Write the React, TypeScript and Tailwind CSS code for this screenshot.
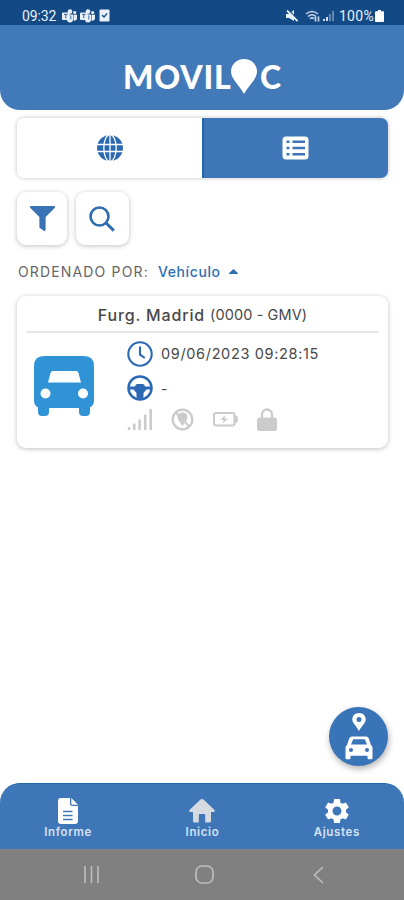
import type { ReactNode } from 'react';
import { FaFilter } from 'react-icons/fa';
import { MdSettings } from 'react-icons/md';

function TeamsIcon() {
  return (
    <svg width="15" height="14" viewBox="0 0 15 14" fill="#e9f0f8">
      <circle cx="8" cy="2.6" r="2.3" />
      <circle cx="12.7" cy="3.6" r="1.6" />
      <path d="M5 5.5h6v5a3 3 0 0 1-6 0zM11.5 5.7H15v3.7a2.4 2.4 0 0 1-3.5 2z" />
      <rect x="0" y="3.5" width="7.5" height="7.5" rx="1" />
      <path d="M2 5.4h3.6M3.8 5.4v4M8.8 6.5v4" stroke="#134985" strokeWidth="0.8" />
    </svg>
  );
}

function StatusBar() {
  return (
    <div className="flex h-[25px] shrink-0 items-center justify-between bg-[#134985] pt-[6px] pr-[20px] pl-[22px] text-[#e9f0f8]">
      <div className="flex items-center">
        <span className="w-[40px] font-['Roboto',sans-serif] text-[14px] leading-none tracking-[-0.1px]">09:32</span>
        <div className="flex items-center gap-[3px]">
          <TeamsIcon />
          <TeamsIcon />
          <svg className="ml-[1px]" width="11" height="13" viewBox="0 0 11 13">
            <rect x="0.5" y="0.5" width="10" height="12" rx="1" fill="#e9f0f8" />
            <path d="M3 6l2 2 3.2-3.6" fill="none" stroke="#134985" strokeWidth="1.3" />
          </svg>
        </div>
      </div>
      <div className="flex items-center">
        <svg width="12" height="12" viewBox="0 0 12 12" fill="#e9f0f8">
          <path d="M0 4h3l5-4v11L3 8H0z" />
          <path d="M3 0.5l9 9" stroke="#134985" strokeWidth="1.2" />
          <path d="M1 0.5l10.5 10.5" stroke="#e9f0f8" strokeWidth="1.8" />
        </svg>
        <svg className="ml-[7px]" width="16" height="12" viewBox="0 0 16 12" fill="none" stroke="#c5d4e6" strokeWidth="1.5">
          <path d="M1 4Q7-1 13 4M3 6.5Q7 3 11 6.5M5 8.8Q7 7 9 8.8" />
          <path d="M10.5 6.5v5M13.5 6.5v5" strokeWidth="1.7" />
        </svg>
        <svg className="ml-[2px]" width="12" height="12" viewBox="0 0 12 12">
          <path d="M1 11v-2M4 11V7" stroke="#e9f0f8" strokeWidth="1.8" />
          <path d="M7 11V4M10 11V1" stroke="#6f90b7" strokeWidth="1.8" />
        </svg>
        <span className="ml-[4px] font-['Roboto',sans-serif] text-[14px] leading-none tracking-[0.3px]">100%</span>
        <svg className="ml-[1px]" width="9" height="12" viewBox="0 0 9 12" fill="#fff">
          <path d="M3 0h3v1.3h2.2q.8 0 .8.9v8.9q0 .9-.8.9H.8Q0 12 0 11.1V2.2Q0 1.3.8 1.3H3z" />
        </svg>
      </div>
    </div>
  );
}

function Logo() {
  return (
    <h1 className="flex items-center font-['Lato',sans-serif] text-[32px] leading-[34px] font-black text-white">
      <span className="w-[108px] tracking-[0.8px]">MOVIL</span>
      <svg width="26" height="35" viewBox="0 0 26 35" fill="#fff">
        <path d="M13 0C5.5 0 0 5.6 0 12.5 0 20 7.5 25 13 35 18.5 25 26 20 26 12.5 26 5.6 20.5 0 13 0z" />
      </svg>
      <span className="ml-[3px]">C</span>
    </h1>
  );
}

function GlobeIcon() {
  return (
    <svg width="26" height="26" viewBox="0 0 26 26">
      <circle cx="13" cy="13" r="13" fill="#2b69b0" />
      <g fill="none" stroke="#fff" strokeWidth="1.3">
        <ellipse cx="13" cy="13" rx="6.2" ry="13.5" />
        <path d="M13 0v26M0 9.5h26M0 16.5h26" />
      </g>
    </svg>
  );
}

function ListIcon() {
  return (
    <svg width="27" height="24" viewBox="0 0 27 24">
      <rect x="0.5" y="0.5" width="26" height="23" rx="3.5" fill="#fff" />
      <g stroke="#3e75b8" strokeWidth="2.6">
        <path d="M4.500 5.8h3M4.5 12h3M4.5 18.2h3" />
        <path d="M10.500 5.8h12.5M10.5 12h12.5M10.5 18.2h12.5" />
      </g>
    </svg>
  );
}

function VanIcon() {
  return (
    <svg width="60" height="60" viewBox="0 0 60 60">
      <path
        fill="#2f93d6"
        fillRule="evenodd"
        d="M10 0h40q10 0 10 10v35q0 3-2 5l-2 1.5V56q0 4-4 4h-3q-4 0-4-4v-4H15v4q0 4-4 4H8q-4 0-4-4v-4.5L2 50q-2-2-2-5V10Q0 0 10 0zM19 15q-2 0-2.5 2L14 26.5h33L44.5 17q-.5-2-2.5-2zM11.5 32.5a5 5 0 1 0 0 10 5 5 0 0 0 0-10zM49 32.5a5 5 0 1 0 0 10 5 5 0 0 0 0-10z"
      />
    </svg>
  );
}

function ClockIcon() {
  return (
    <svg width="26" height="26" viewBox="0 0 26 26" fill="none" stroke="#2b69b5" strokeWidth="2.1">
      <circle cx="13" cy="13" r="11.7" />
      <path d="M13 5.5v8.2l4.8 3.3" />
    </svg>
  );
}

function SteeringIcon() {
  return (
    <svg width="26" height="26" viewBox="0 0 26 26">
      <circle cx="13" cy="13" r="11.5" fill="none" stroke="#2b69b5" strokeWidth="2.5" />
      <path d="M2 11.5h6Q8.500 9 10 9h6q1.500 0 2 2.500h6v3h-4.500L16.500 18v6h-7v-6L6.500 14.500H2z" fill="#2b69b5" />
    </svg>
  );
}

function SignalIcon() {
  return (
    <svg width="26" height="23" viewBox="0 0 26 23" stroke="#cbcbcb" strokeWidth="2.6" strokeLinecap="round">
      <path d="M2 21v-.8M7.3 21v-4.5M12.6 21v-8.500M18.2 21V7.5M23.7 21V2" />
    </svg>
  );
}

function NoLocationIcon() {
  return (
    <svg width="23" height="23" viewBox="0 0 23 23">
      <circle cx="11.5" cy="11.5" r="9.8" fill="none" stroke="#cbcbcb" strokeWidth="2.3" />
      <path d="M11.5 4.5c-3 0-5 2-5 4.8 0 3.2 3.2 5 5 9.2 1.8-4.2 5-6 5-9.2 0-2.8-2-4.8-5-4.8z" fill="#cbcbcb" />
      <path d="M5.5 4.5L18.5 18" stroke="#e4e4e4" strokeWidth="1" />
      <path d="M4.5 4.5l14 14" stroke="#cbcbcb" strokeWidth="1.9" />
    </svg>
  );
}

function BatteryIcon() {
  return (
    <svg width="25" height="15" viewBox="0 0 25 15">
      <rect x="1" y="1" width="20.5" height="12.5" rx="2" fill="none" stroke="#cbcbcb" strokeWidth="2" />
      <path d="M22 3q3 1 3 4.2T22 11.5z" fill="#cbcbcb" />
      <path d="M12 3L7.5 8h3.2l-1 3.5L15 6.5h-3.3z" fill="#cbcbcb" />
    </svg>
  );
}

function LockIcon() {
  return (
    <svg width="20" height="23" viewBox="0 0 20 23">
      <rect y="9.5" width="20" height="13.5" rx="2.5" fill="#cbcbcb" />
      <path d="M5 10V6.5a5 5 0 0 1 10 0V10" fill="none" stroke="#cbcbcb" strokeWidth="2.3" />
    </svg>
  );
}

function VehicleCard() {
  return (
    <div className="mt-[16px] mr-[16px] ml-[17px] h-[152px] rounded-[9px] bg-white px-[9px] font-['Inter',sans-serif] text-[#484848] shadow-[0_1px_5px_rgba(0,0,0,0.25)]">
      <div className="flex h-[37px] items-center justify-center border-b-2 border-[#e5e5e5] pt-[2px] whitespace-nowrap">
        <span className="text-[16px] font-medium tracking-[0.85px]">Furg. Madrid</span>
        <span className="ml-[5px] text-[14.5px] tracking-[0.1px]">(0000 - GMV)</span>
      </div>
      <div className="flex">
        <div className="w-[101px] pt-[23px] pl-[8px]">
          <VanIcon />
        </div>
        <div className="pt-[8px]">
          <div className="flex h-[26px] items-center gap-[8px]">
            <ClockIcon />
            <span className="text-[14.5px] tracking-[0.65px] whitespace-nowrap">09/06/2023 09:28:15</span>
          </div>
          <div className="mt-[8px] flex h-[26px] items-center gap-[8px]">
            <SteeringIcon />
            <span className="text-[14px]">-</span>
          </div>
          <div className="mt-[7px] flex h-[23px] items-center">
            <SignalIcon />
            <span className="ml-[18px]"><NoLocationIcon /></span>
            <span className="ml-[19px]"><BatteryIcon /></span>
            <span className="ml-[19px]"><LockIcon /></span>
          </div>
        </div>
      </div>
    </div>
  );
}

function LocateButton() {
  return (
    <button className="mr-[16px] flex h-[59px] w-[59px] items-center justify-center rounded-full bg-[#3973b8] shadow-[1px_3px_6px_rgba(0,0,0,0.3)]">
      <svg width="28" height="47" viewBox="0 0 28 47">
        <path fill="#fff" fillRule="evenodd" d="M14 0C10 0 7.3 2.8 7.3 6.5 7.3 10 11 12.5 14 18c3-5.5 6.7-8 6.7-11.5C20.7 2.8 18 0 14 0zm0 4a2.5 2.5 0 1 1 0 5 2.5 2.5 0 0 1 0-5z" />
        <path fill="#fff" fillRule="evenodd" d="M7 23.5h14q2 0 2.8 2l2.2 6.5q1.5 1 1.5 3V45q0 1.2-1.2 1.2h-2.6q-1.2 0-1.2-1.2v-2.2h-17V45q0 1.2-1.2 1.2H1.7Q.5 46.200.5 45V35q0-2 1.5-3l2.2-6.5q.8-2 2.8-2zm1.2 2.7L6 31.5h16l-2.2-5.3zM6 35a2 2 0 1 0 0 4 2 2 0 0 0 0-4zM22 35a2 2 0 1 0 0 4 2 2 0 0 0 0-4z" />
      </svg>
    </button>
  );
}

function DocumentIcon() {
  return (
    <svg width="20" height="26" viewBox="0 0 20 26">
      <path d="M3 0h9v5.5Q12 8 14.5 8H20v15q0 3-3 3H3q-3 0-3-3V3Q0 0 3 0zM13.3 0L20 6.8h-5.5q-1.2 0-1.2-1.3z" fill="#fff" />
      <path d="M5 13.5h9.5M5 17.5h9.5M5 21.5h9.5" stroke="#3f76b8" strokeWidth="1.5" />
    </svg>
  );
}

function HomeIcon() {
  return (
    <svg width="26" height="24" viewBox="0 0 26 24" fill="#d6dbe1">
      <path d="M11.5.6q1.5-1.2 3 0L25.5 11q1 1.5-.7 2H22v9q0 1.5-1.5 1.5h-4.3V16q0-1-1-1h-4.400q-1 0-1 1v7.500H5.5Q4 23.5 4 22v-9H1.2Q-.5 12.5.5 11z" />
    </svg>
  );
}

function NavItem({ icon, label }: { icon: ReactNode; label: string }) {
  return (
    <div className="flex flex-1 flex-col items-center">
      <div className="flex h-[28px] items-center">{icon}</div>
      <span className="mt-[1px] font-['Inter',sans-serif] text-[11.5px] leading-[13px] font-semibold tracking-[0.65px] text-[#d5e2f3]">{label}</span>
    </div>
  );
}

export default function App() {
  return (
    <div className="flex h-[900px] w-[404px] flex-col overflow-hidden bg-white">
      <StatusBar />
      <header className="flex h-[85px] shrink-0 items-start justify-center rounded-b-[20px] bg-[#4279b9] pt-[34px]">
        <Logo />
      </header>

      <div className="mt-[8px] mr-[16px] ml-[17px] flex h-[60px] shrink-0 rounded-[7px] shadow-[0_0_4px_rgba(0,0,0,0.25)]">
        <button className="flex w-[185px] items-center justify-center rounded-l-[7px] bg-white pl-[1px]"><GlobeIcon /></button>
        <button className="flex flex-1 items-center justify-center rounded-r-[7px] border-l-2 border-[#206aab] bg-[#3f76b8] pr-[1px]"><ListIcon /></button>
      </div>

      <div className="mt-[14px] ml-[17px] flex gap-[9px]">
        <button className="flex h-[53px] w-[50px] items-center justify-center rounded-[9px] bg-white shadow-[0_1px_5px_rgba(0,0,0,0.25)]">
          <FaFilter size={25} color="#3973b5" />
        </button>
        <button className="flex h-[53px] w-[53px] items-center justify-center rounded-[9px] bg-white pr-[1px] shadow-[0_1px_5px_rgba(0,0,0,0.25)]">
          <svg width="26" height="26" viewBox="0 0 26 26" fill="none" stroke="#2e6caf" strokeWidth="2.6">
            <circle cx="10.5" cy="10.5" r="9" />
            <path d="M16.8 16.8l8 7.8" strokeWidth="3" />
          </svg>
        </button>
      </div>

      <div className="mt-[17px] ml-[18px] flex h-[18px] items-center font-['Inter',sans-serif] text-[14px] whitespace-nowrap">
        <span className="w-[140px] tracking-[1.15px] text-[#666]">ORDENADO POR:</span>
        <span className="w-[71px] font-medium tracking-[0.6px] text-[#2d6eaf]">Vehículo</span>
        <svg width="9" height="5" viewBox="0 0 9 5" fill="#2d6eaf"><path d="M0 5Q0 4 1 3.3L4.5 0 8 3.3Q9 4 9 5z" /></svg>
      </div>

      <VehicleCard />

      <div className="mt-auto mb-[17px] flex justify-end"><LocateButton /></div>

      <nav className="flex h-[66px] shrink-0 rounded-t-[20px] border-t border-[#206aab] bg-[#3f76b8] pt-[13px] pl-[1px]">
        <NavItem label="Informe" icon={<DocumentIcon />} />
        <NavItem label="Inicio" icon={<HomeIcon />} />
        <NavItem label="Ajustes" icon={<MdSettings size={30} color="#fff" />} />
      </nav>

      <div className="flex h-[51px] shrink-0 items-center bg-[#808080]">
        <svg className="ml-[83px]" width="17" height="17" viewBox="0 0 17 17" stroke="#bdbdbd" strokeWidth="1.6"><path d="M2 0v17M8.5 0v17M15 0v17" /></svg>
        <svg className="ml-[95px]" width="19" height="19" viewBox="0 0 19 19" fill="none" stroke="#bdbdbd" strokeWidth="1.7"><rect x="1" y="1" width="17" height="17" rx="6" /></svg>
        <svg className="ml-[99px]" width="11" height="18" viewBox="0 0 11 18" fill="none" stroke="#bdbdbd" strokeWidth="1.7"><path d="M10 1L1.5 9l8.5 8" /></svg>
      </div>
    </div>
  );
}
